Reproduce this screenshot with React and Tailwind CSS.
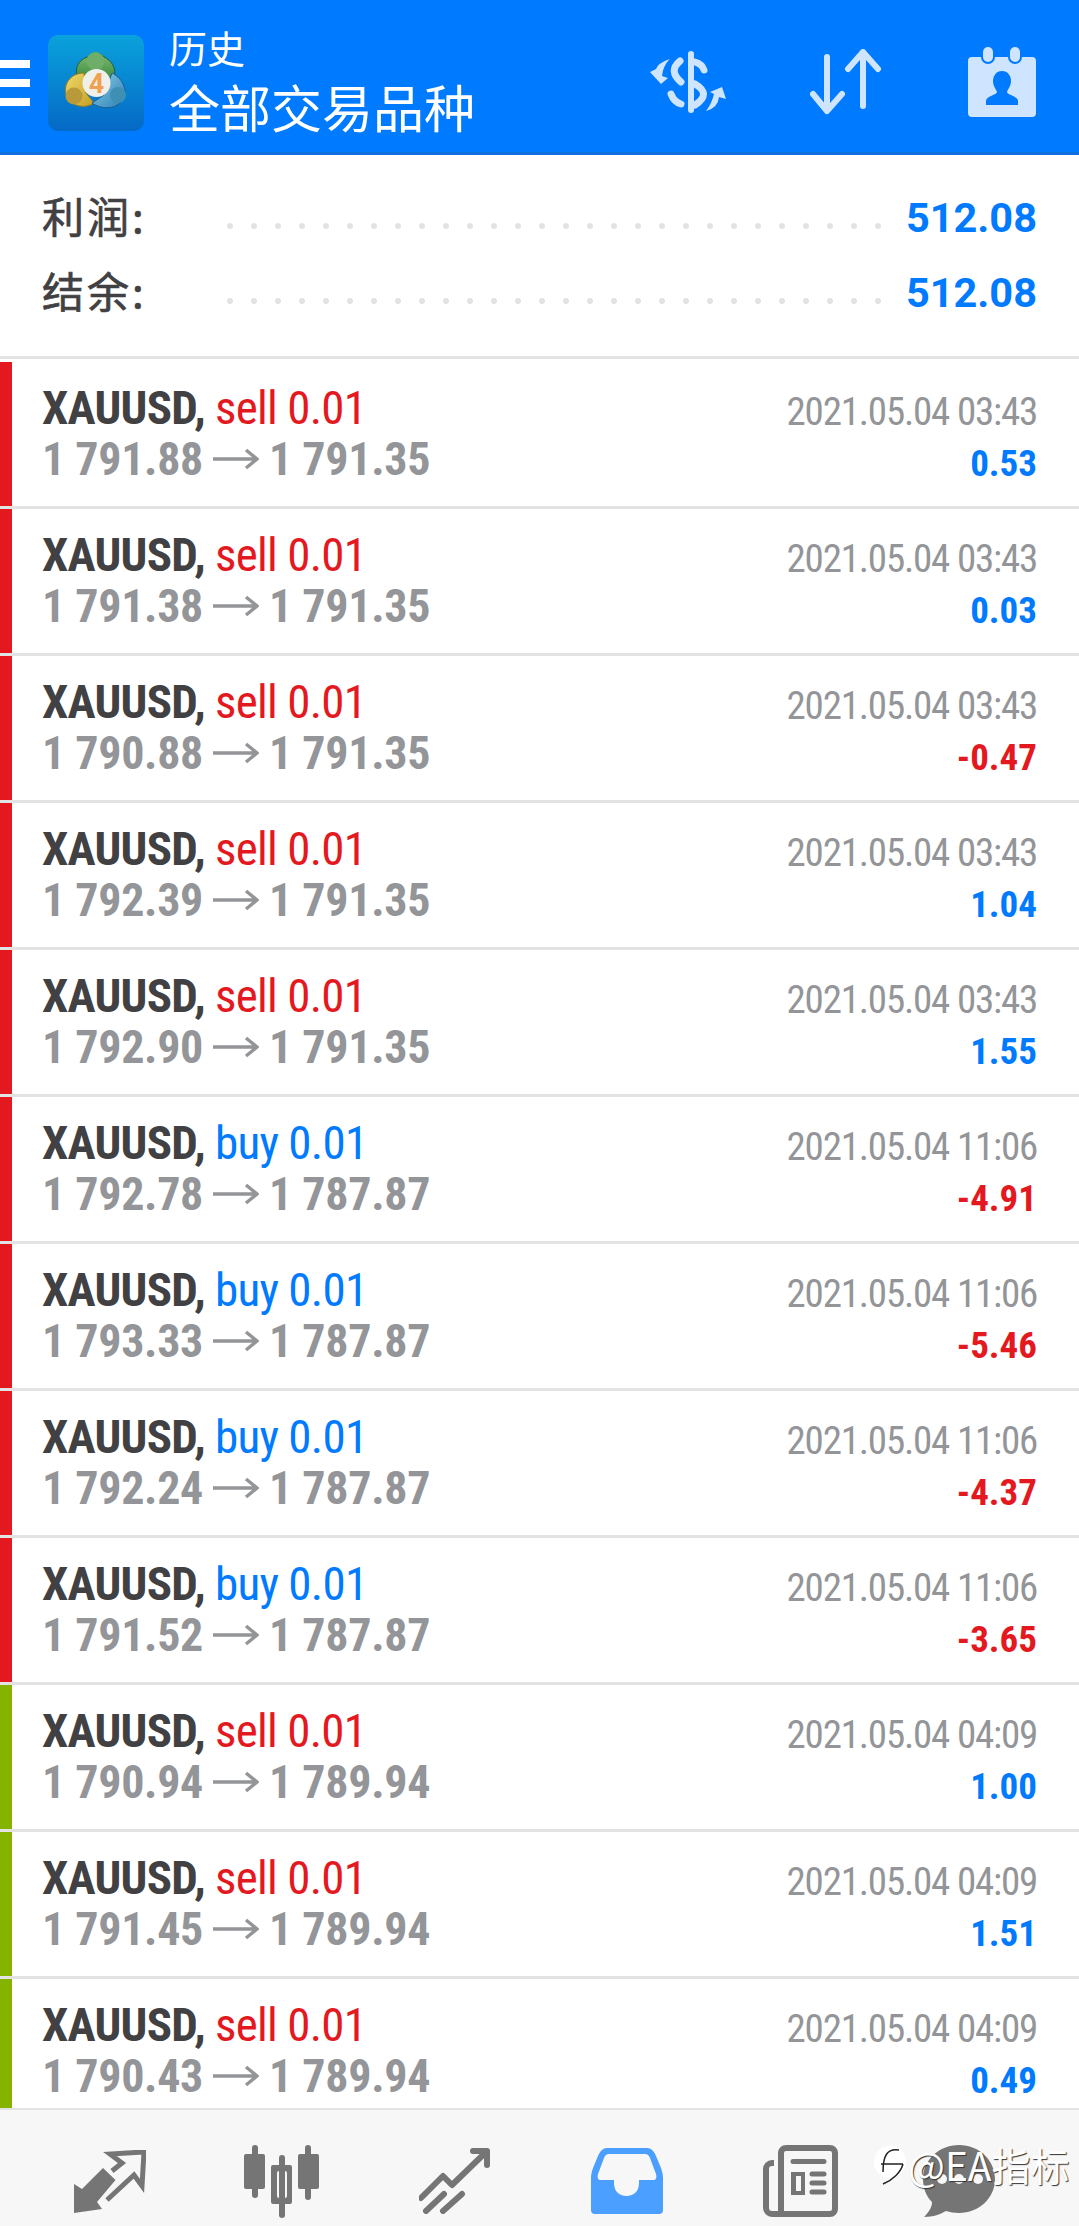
import React from 'react';

const rows = [
  ['sell', '1 791.88', '1 791.35', '2021.05.04 03:43', '0.53', 'red'],
  ['sell', '1 791.38', '1 791.35', '2021.05.04 03:43', '0.03', 'red'],
  ['sell', '1 790.88', '1 791.35', '2021.05.04 03:43', '-0.47', 'red'],
  ['sell', '1 792.39', '1 791.35', '2021.05.04 03:43', '1.04', 'red'],
  ['sell', '1 792.90', '1 791.35', '2021.05.04 03:43', '1.55', 'red'],
  ['buy', '1 792.78', '1 787.87', '2021.05.04 11:06', '-4.91', 'red'],
  ['buy', '1 793.33', '1 787.87', '2021.05.04 11:06', '-5.46', 'red'],
  ['buy', '1 792.24', '1 787.87', '2021.05.04 11:06', '-4.37', 'red'],
  ['buy', '1 791.52', '1 787.87', '2021.05.04 11:06', '-3.65', 'red'],
  ['sell', '1 790.94', '1 789.94', '2021.05.04 04:09', '1.00', 'green'],
  ['sell', '1 791.45', '1 789.94', '2021.05.04 04:09', '1.51', 'green'],
  ['sell', '1 790.43', '1 789.94', '2021.05.04 04:09', '0.49', 'green'],
];

const Logo = () => (
  <svg width="96" height="96" viewBox="0 0 96 96" className="shrink-0">
    <defs>
      <linearGradient id="bgLogo" x1="0" y1="0" x2="0" y2="1">
        <stop offset="0" stopColor="#0aa2dc" />
        <stop offset="1" stopColor="#0569c6" />
      </linearGradient>
      <linearGradient id="greenLogo" x1="0" y1="0" x2="0" y2="1">
        <stop offset="0" stopColor="#7dbb6c" />
        <stop offset="1" stopColor="#2f7f3d" />
      </linearGradient>
      <linearGradient id="yellowLogo" x1="0" y1="0" x2="1" y2="1">
        <stop offset="0" stopColor="#efd968" />
        <stop offset="1" stopColor="#c59f25" />
      </linearGradient>
      <linearGradient id="blueLogo" x1="0" y1="0" x2="1" y2="1">
        <stop offset="0" stopColor="#8fd0ea" />
        <stop offset="1" stopColor="#2b7fb4" />
      </linearGradient>
    </defs>
    <rect width="96" height="96" rx="10" fill="url(#bgLogo)" />
    <path d="M29 41 C26 30 34 23 40 22 C43 17 53 17 56 22 C63 25 69 33 66 43 L48 50 Z" fill="url(#greenLogo)" stroke="#1f5f35" strokeWidth="1" />
    <circle cx="47.5" cy="26" r="9" fill="#6fae68" />
    <path d="M36 38 C22 38 14 50 19 62 C24 72 38 74 46 68 L38 58 Z" fill="url(#yellowLogo)" stroke="#8f7a25" strokeWidth="1" />
    <circle cx="26" cy="61" r="8.5" fill="#b89a3a" />
    <path d="M64 38 C76 44 81 58 73 67 C66 75 52 74 44 68 L56 60 Z" fill="url(#blueLogo)" stroke="#1c5f8f" strokeWidth="1" />
    <circle cx="70" cy="60" r="8" fill="#3d8fb4" />
    <circle cx="48.5" cy="48" r="14" fill="#efefec" />
    <text x="48.5" y="58" textAnchor="middle" fontSize="27" fontWeight="700" fill="#f0a04f" fontFamily="Roboto, sans-serif">4</text>
  </svg>
);

const DollarIcon = () => (
  <svg width="80" height="62" viewBox="0 0 80 62" fill="none" stroke="#cfe5ff" strokeWidth="7">
    <path d="M43 3 V59" strokeWidth="6" strokeLinecap="round" />
    <path d="M32 10 Q20 20 33 31 M47 11 Q54 13 56 19 M47 33 Q64 43 47 54 M23 43 Q26 51 33 53" strokeLinecap="round" />
    <path d="M21.7 8 Q10 12 8 18 L2 21 L13 33 L20 27 L14 25 Q15 15 21.7 8Z" fill="#cfe5ff" stroke="none" />
    <path d="M58 60 Q70 57 71 46 L78 48 L74 36 L62 41 L66 43 Q64 52 58 60Z" fill="#cfe5ff" stroke="none" />
  </svg>
);

const SortIcon = () => (
  <svg width="74" height="66" viewBox="0 0 74 66" fill="none" stroke="#cfe5ff" strokeWidth="6" strokeLinecap="round" strokeLinejoin="round">
    <path d="M18 8 V61 M4 45 L18 62 L33 45" />
    <path d="M54 57 V3 M39 20 L54 3 L69 20" />
  </svg>
);

const CalendarIcon = () => (
  <svg width="68" height="70" viewBox="0 0 68 70">
    <rect y="10" width="68" height="60" rx="4" fill="#cfe5ff" />
    <rect x="13" y="-1" width="14" height="18" rx="7" fill="#007aff" />
    <rect x="40" y="-1" width="14" height="18" rx="7" fill="#007aff" />
    <rect x="15" y="0" width="10" height="15" rx="5" fill="#cfe5ff" />
    <rect x="42" y="0" width="10" height="15" rx="5" fill="#cfe5ff" />
    <path d="M34 24 C40 24 43 29 43 34 C43 39 40 42 39 45 C39 48 50 49 50 54 V58 H18 V54 C18 49 29 48 29 45 C28 42 25 39 25 34 C25 29 28 24 34 24Z" fill="#007aff" />
  </svg>
);

const TradeIcon = () => (
  <svg width="72" height="63" viewBox="0 0 72 63" fill="none" stroke="#757575" strokeWidth="5">
    <path d="M0 34 L8 39 L29 18 L41.5 30 L23 52 L28 59 L0 63 Z" fill="#757575" stroke="none" />
    <path d="M38 21 L48 13 L36 4 L70 2 L68 36 L60 25 L33 50" />
  </svg>
);

const CandleIcon = () => (
  <svg width="75" height="73" viewBox="0 0 75 73" fill="#757575">
    <rect x="8" y="0" width="6" height="53" rx="3" />
    <rect x="0" y="9" width="21" height="35" rx="2" />
    <rect x="35" y="10" width="6" height="63" rx="3" />
    <path fillRule="evenodd" d="M29 20 H46 a2 2 0 0 1 2 2 V57 a2 2 0 0 1 -2 2 H29 a2 2 0 0 1 -2 -2 V22 a2 2 0 0 1 2 -2Z M35 26 a2 2 0 0 0 -2 2 V51 a2 2 0 0 0 2 2 H41 a2 2 0 0 0 2 -2 V28 a2 2 0 0 0 -2 -2Z" />
    <rect x="61" y="0" width="6" height="55" rx="3" />
    <rect x="54" y="9" width="21" height="35" rx="2" />
  </svg>
);

const ChartIcon = () => (
  <svg width="71" height="66" viewBox="0 0 71 66" fill="none" stroke="#757575" strokeWidth="6" strokeLinecap="round" strokeLinejoin="round">
    <path d="M2 50 L24 28 L33 37 L67 4" />
    <path d="M54 3 H68 V17" />
    <path d="M7 63 L25 46 M24 63 L43 46" />
  </svg>
);

const InboxIcon = () => (
  <svg width="72" height="66" viewBox="0 0 72 66">
    <path
      fillRule="evenodd"
      fill="#4a9fff"
      d="M16 0 H56 C60 0 63 3 65 8 L70 20 C71 23 72 26 72 30 V62 a4 4 0 0 1 -4 4 H4 a4 4 0 0 1 -4 -4 V30 C0 26 1 23 2 20 L7 8 C9 3 12 0 16 0Z M18 6 C15 6 14 8 13 10 L7 26 C6 30 7 32 10 32 H23 V35 C23 43 28 48 35.5 48 C43 48 48 43 48 35 V32 H62 C65 32 66 30 65 26 L59 10 C58 8 57 6 54 6Z"
    />
  </svg>
);

const NewsIcon = () => (
  <svg width="75" height="72" viewBox="0 0 75 72" fill="none" stroke="#757575" strokeWidth="6">
    <path d="M18 69 V8 a5 5 0 0 1 5 -5 H67 a5 5 0 0 1 5 5 V64 a5 5 0 0 1 -5 5 H9 a6 6 0 0 1 -6 -6 V24 a6 6 0 0 1 6 -6 H11" />
    <path d="M30 16.5 H61 M49 29 H61 M49 38 H61 M49 47 H61" strokeWidth="5" strokeLinecap="round" />
    <path fillRule="evenodd" fill="#757575" stroke="none" d="M28 27 H42 V50 H28Z M33 31 V46 H38 V31Z" />
  </svg>
);

const ChatIcon = () => (
  <svg width="72" height="72" viewBox="0 0 72 72">
    <path d="M36 0 C56 0 72 15 72 34 C72 53 56 68 36 68 C31 68 27 67 23 66 C18 69 10 72 1 72 C5 68 9 63 9 57 C3 51 0 43 0 34 C0 15 16 0 36 0Z" fill="#757575" />
    <circle cx="19" cy="34" r="5" fill="#f7f7f7" />
    <circle cx="36" cy="34" r="5" fill="#f7f7f7" />
    <circle cx="55" cy="34" r="5" fill="#f7f7f7" />
  </svg>
);

const Dots = () => (
  <div className="absolute left-[227px] top-[43px] flex gap-[18px]">
    {Array.from({ length: 28 }).map((_, i) => (
      <span key={i} className="w-[6px] h-[6px] rounded-full bg-[#e3e3e3]" />
    ))}
  </div>
);

const SummaryRow = ({ label, value }) => (
  <div className="relative h-[75px] flex items-center justify-between pl-[42px] pr-[42px]">
    <span className="text-[42px] tracking-[3px] mt-[-6px] leading-none text-[#414042] [-webkit-text-stroke:0.7px_#414042] font-['Noto_Sans_CJK_SC',sans-serif]">{label}</span>
    <Dots />
    <span className="text-[41.5px] font-bold leading-none text-[#007aff]">{value}</span>
  </div>
);

const Arrow = () => (
  <svg width="46" height="24" viewBox="0 0 46 24" fill="none" stroke="#939598" strokeWidth="3.5" className="mx-[10px] shrink-0">
    <path d="M0 12 H44 M33 3 L44 12 L33 21" />
  </svg>
);

const Row = ({ row }) => {
  const [side, open, close, time, profit, bar] = row;
  const negative = profit.startsWith('-');
  return (
    <div className="flex h-[147px] shrink-0 border-b-[3px] border-[#e3e3e3]">
      <div className={`w-3 shrink-0 ${bar === 'red' ? 'bg-[#e3191f]' : 'bg-[#86b300]'}`} />
      <div className="flex-1 flex justify-between pl-[30px] pr-[42px] [font-stretch:75%]">
        <div className="pt-[21px]">
          <div className="text-[47px] leading-[50px] tracking-[-0.75px] whitespace-nowrap">
            <span className="font-bold text-[#414042]">XAUUSD, </span>
            <span className={side === 'sell' ? 'text-[#e3191f]' : 'text-[#007aff]'}>{side} 0.01</span>
          </div>
          <div className="mt-[1px] flex items-center text-[46px] leading-[50px] tracking-[-0.3px] font-bold text-[#939598] whitespace-nowrap">
            {open}
            <Arrow />
            {close}
          </div>
        </div>
        <div className="pt-[25px] text-right">
          <div className="text-[39px] leading-[50px] mb-[2px] tracking-[-1.2px] text-[#939598]">{time}</div>
          <div className={`text-[37px] leading-[50px] font-bold ${negative ? 'text-[#e3191f]' : 'text-[#007aff]'}`}>{profit}</div>
        </div>
      </div>
    </div>
  );
};

const App = () => {
  return (
    <div className="relative w-[1079px] h-[2226px] flex flex-col bg-white overflow-hidden font-['Roboto','Noto_Sans_CJK_SC',sans-serif]">
      <header className="h-[155px] shrink-0 bg-[#007aff] border-b-[3px] border-[#0f6fdc] flex items-center text-white">
        <div className="w-[30px] mt-[14px] flex flex-col gap-[11px] shrink-0">
          <span className="h-2 bg-white" />
          <span className="h-2 bg-white" />
          <span className="h-2 bg-white" />
        </div>
        <div className="ml-[18px] mt-[14px]">
          <Logo />
        </div>
        <div className="ml-[25px] mt-[8px] font-['Noto_Sans_CJK_SC',sans-serif]">
          <div className="text-[38px] leading-[46px]">历史</div>
          <div className="text-[51px] leading-[60px] mt-[6px]">全部交易品种</div>
        </div>
        <div className="ml-auto mt-[12px] flex items-center pr-[43px]">
          <DollarIcon />
          <div className="ml-[81px]"><SortIcon /></div>
          <div className="ml-[85px]"><CalendarIcon /></div>
        </div>
      </header>

      <section className="h-[204px] shrink-0 pt-[25px] border-b-[3px] border-[#e3e3e3]">
        <SummaryRow label="利润:" value="512.08" />
        <SummaryRow label="结余:" value="512.08" />
      </section>

      <div className="flex-1 min-h-0 pt-[3px] overflow-hidden">
        {rows.map((row, i) => (
          <Row key={i} row={row} />
        ))}
      </div>

      <footer className="h-[118px] shrink-0 bg-[#f7f7f7] border-t-[2px] border-[#e3e3e3] flex items-center pl-[74px] pt-[26px]">
        <TradeIcon />
        <div className="ml-[98px]"><CandleIcon /></div>
        <div className="ml-[100px]"><ChartIcon /></div>
        <div className="ml-[101px]"><InboxIcon /></div>
        <div className="ml-[100px]"><NewsIcon /></div>
        <div className="ml-[85px]"><ChatIcon /></div>
      </footer>

      <div className="absolute left-[873px] top-[2142px] flex items-center gap-[1px] text-[39px] leading-[44px] text-white [text-shadow:1px_1px_1px_#333] font-['Noto_Sans_CJK_SC',sans-serif]">
        <svg width="34" height="44" viewBox="0 0 34 44" fill="none">
          <circle cx="17" cy="20" r="16" fill="#fff" />
          <path d="M10 30 C10 14 14 6 26 8 M8 22 H30 M30 22 C28 30 20 38 10 42" stroke="#222" strokeWidth="1.5" />
        </svg>
        <span>@EA指标</span>
      </div>
    </div>
  );
};

export default App;
